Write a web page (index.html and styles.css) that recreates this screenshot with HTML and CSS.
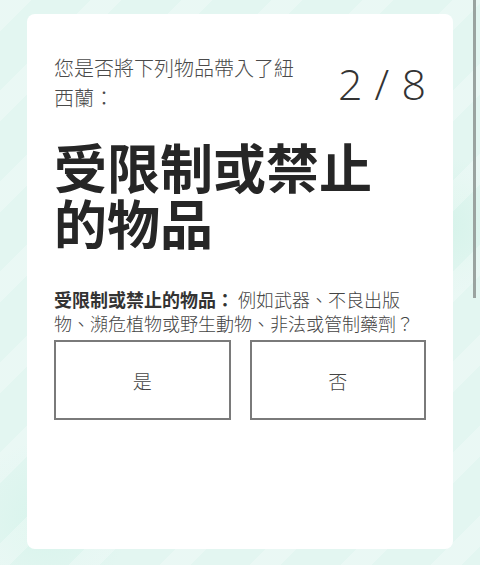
FILE: index.html
```html
<!DOCTYPE html>
<html lang="zh-Hant">
<head>
  <meta charset="UTF-8" />
  <title>旅客申報</title>
  <meta name="viewport" content="width=device-width,initial-scale=1" />
  <link rel="stylesheet" href="styles.css">
</head>
<body>
  <div class="card">
    <div class="card-head">
      <p class="question">您是否將下列物品帶入了紐西蘭：</p>
      <div class="counter">2 / 8</div>
    </div>
    <h1 class="title">受限制或禁止的物品</h1>
    <p class="desc"><b>受限制或禁止的物品：</b> 例如武器、不良出版<br>物、瀕危植物或野生動物、非法或管制藥劑？</p>
    <div class="answers">
      <button class="answer">是</button>
      <button class="answer">否</button>
    </div>
  </div>
  <!-- scrollbar thumb drawn over the page -->
  <div class="scroll-thumb"></div>
</body>
</html>
```

FILE: styles.css
```css
body {
  margin: 0;
  padding: 14px 27px 16px 27px;
  height: 565px;
  box-sizing: border-box;
  overflow: hidden;
  font-family: "Noto Sans CJK TC", "Noto Sans", sans-serif;
  color: #444;
  background-color: #e3f6f1;
  background-image:
    repeating-linear-gradient(135deg, rgba(255,255,255,0.25) 0 22px, rgba(255,255,255,0) 22px 64px),
    radial-gradient(circle at 92% 40%, #d6f3ea 0, rgba(214,243,234,0) 70px),
    radial-gradient(circle at 10% 92%, #d8f4ec 0, rgba(216,244,236,0) 80px);
}
.card {
  background: #fff;
  border-radius: 8px;
  height: 535px;
  box-sizing: border-box;
  padding: 38px 27px 0 27px;
}
.card-head {
  display: flex;
  align-items: center;
  justify-content: space-between;
}
.question {
  margin: 0;
  width: 250px;
  font-size: 20px;
  font-weight: 300;
  line-height: 30px;
  color: #4a4a4a;
}
.counter {
  font-family: "Open Sans", "Lato", sans-serif;
  font-weight: 300;
  font-size: 43px;
  color: #333;
  word-spacing: 1px;
  margin-top: 2px;
}
.title {
  margin: 25px 0 0 0;
  max-width: 345px;
  font-size: 53px;
  line-height: 56px;
  font-weight: 700;
  color: #262626;
}
.desc {
  margin: 37px 0 0 0;
  font-size: 18px;
  font-weight: 300;
  line-height: 24px;
  color: #444;
}
.desc b { color: #333; font-weight: 700; }
.answers {
  display: flex;
  gap: 19px;
  margin-top: 5px;
}
.answer {
  flex: 1;
  height: 80px;
  background: #fff;
  border: 2px solid #7a7a7a;
  border-radius: 0;
  font-family: inherit;
  font-size: 19px;
  font-weight: 300;
  color: #444;
  padding: 0;
}
.scroll-thumb {
  position: fixed;
  right: 4px;
  top: 0;
  width: 3px;
  height: 298px;
  background: #9aa3a0;
}
```
